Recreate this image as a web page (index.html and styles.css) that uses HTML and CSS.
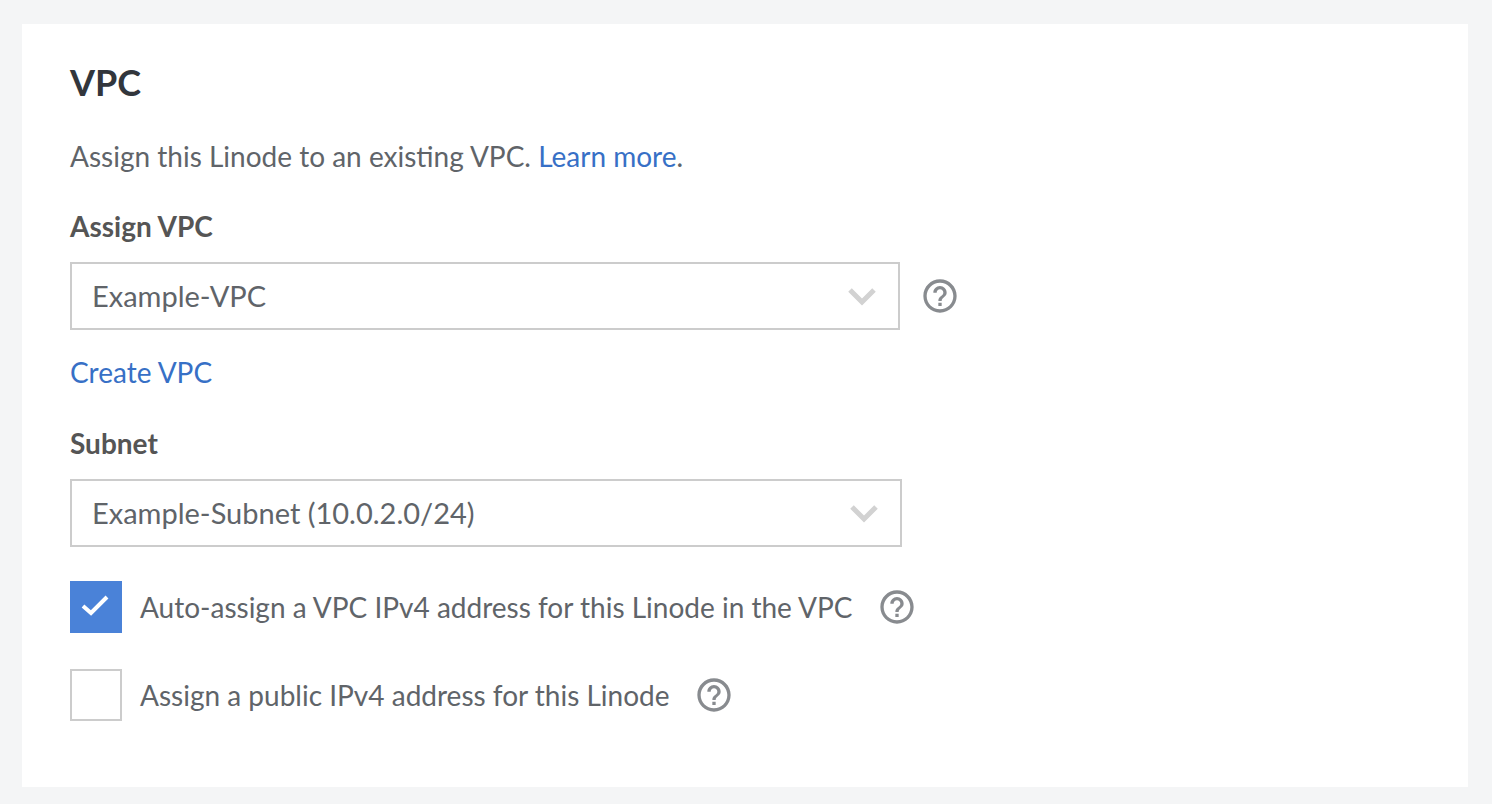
FILE: index.html
```html
<!DOCTYPE html>
<html lang="en">
<head>
<meta charset="utf-8">
<title>VPC</title>
<link rel="stylesheet" href="styles.css">
</head>
<body>
<svg class="sprite" aria-hidden="true">
  <symbol id="help" viewBox="0 0 24 24"><path d="M11 18h2v-2h-2v2zm1-16C6.480 2 2 6.480 2 12s4.480 10 10 10 10-4.480 10-10S17.520 2 12 2zm0 18c-4.410 0-8-3.590-8-8s3.590-8 8-8 8 3.590 8 8-3.590 8-8 8zm0-14c-2.210 0-4 1.790-4 4h2c0-1.100.9-2 2-2s2 .9 2 2c0 2-3 1.750-3 5h2c0-2.250 3-2.500 3-5 0-2.210-1.790-4-4-4z"/></symbol>
</svg>
<main class="panel">
  <h1 class="title">VPC</h1>
  <p class="intro">Assign this Linode to an existing VPC. <a href="#learn">Learn more</a>.</p>
  <label class="label" for="vpc">Assign VPC</label>
  <div class="field">
    <div class="picker">
      <select id="vpc"><option>Example-VPC</option></select>
      <svg class="chevron" viewBox="0 0 28 18" aria-hidden="true"><path d="M2 2l12 12 12-12"/></svg>
    </div>
    <button class="help" type="button" aria-label="VPC help"><svg><use href="#help"/></svg></button>
  </div>
  <a class="create" href="#create">Create VPC</a>
  <label class="label" for="subnet">Subnet</label>
  <div class="field">
    <div class="picker picker-wide">
      <select id="subnet"><option>Example-Subnet (10.0.2.0/24)</option></select>
      <svg class="chevron" viewBox="0 0 28 18" aria-hidden="true"><path d="M2 2l12 12 12-12"/></svg>
    </div>
  </div>
  <div class="checks">
    <div class="check">
      <label><span class="tick"><input type="checkbox" checked><svg viewBox="0 0 52 52" aria-hidden="true"><path d="M13 25l8 7 16-16"/></svg></span>Auto-assign a VPC IPv4 address for this Linode in the VPC</label>
      <button class="help" type="button" aria-label="Private address help"><svg><use href="#help"/></svg></button>
    </div>
    <div class="check">
      <label><span class="tick"><input type="checkbox"><svg viewBox="0 0 52 52" aria-hidden="true"><path d="M13 25l8 7 16-16"/></svg></span>Assign a public IPv4 address for this Linode</label>
      <button class="help" type="button" aria-label="Public address help"><svg><use href="#help"/></svg></button>
    </div>
  </div>
</main>
</body>
</html>
```
FILE: styles.css
```css
* { box-sizing: border-box; }
body {
  margin: 0;
  padding: 24px 24px 17px 22px;
  background: #f4f5f6;
  color: #606469;
  font: 28px/34px Lato, sans-serif;
}
a { color: #3770c6; text-decoration: none; }
.sprite { display: none; }
.panel { background: #fff; padding: 35px 48px 66px; }
.title { margin: 0; color: #32363c; font-size: 36px; line-height: 46px; font-weight: 700; }
.intro { margin: 34px 0 36px; }
.label { display: block; margin-bottom: 19px; color: #555; font-weight: 700; }
.field { display: flex; align-items: center; gap: 20px; }
.picker { position: relative; width: 100%; max-width: 830px; }
.picker-wide { max-width: 832px; }
select {
  appearance: none;
  display: block;
  width: 100%;
  height: 68px;
  padding: 0 60px 0 20px;
  border: 2px solid #ccc;
  border-radius: 0;
  background: #fff;
  color: #606469;
  font: inherit;
  font-size: 29px;
}
.chevron {
  position: absolute;
  right: 24px;
  top: 26px;
  width: 28px;
  height: 18px;
  fill: none;
  stroke: #d2d2d2;
  stroke-width: 5;
  pointer-events: none;
}
.help { flex: none; padding: 0; border: 0; background: none; }
.help svg { display: block; width: 40px; height: 40px; fill: #888b8f; }
.create { display: block; width: max-content; margin: 25px 0 37px; }
.checks { display: grid; gap: 36px; margin-top: 34px; }
.check { display: flex; align-items: center; gap: 24px; }
.check label { display: flex; align-items: center; gap: 18px; }
.tick { position: relative; flex: none; width: 52px; height: 52px; }
.tick input {
  appearance: none;
  display: block;
  width: 52px;
  height: 52px;
  margin: 0;
  border: 2px solid #ccc;
  background: #fff;
}
.tick input:checked { border-color: #4a82d8; background: #4a82d8; }
.tick svg { position: absolute; inset: 0; fill: none; stroke: #fff; stroke-width: 4; display: none; pointer-events: none; }
.tick input:checked + svg { display: block; }
```
